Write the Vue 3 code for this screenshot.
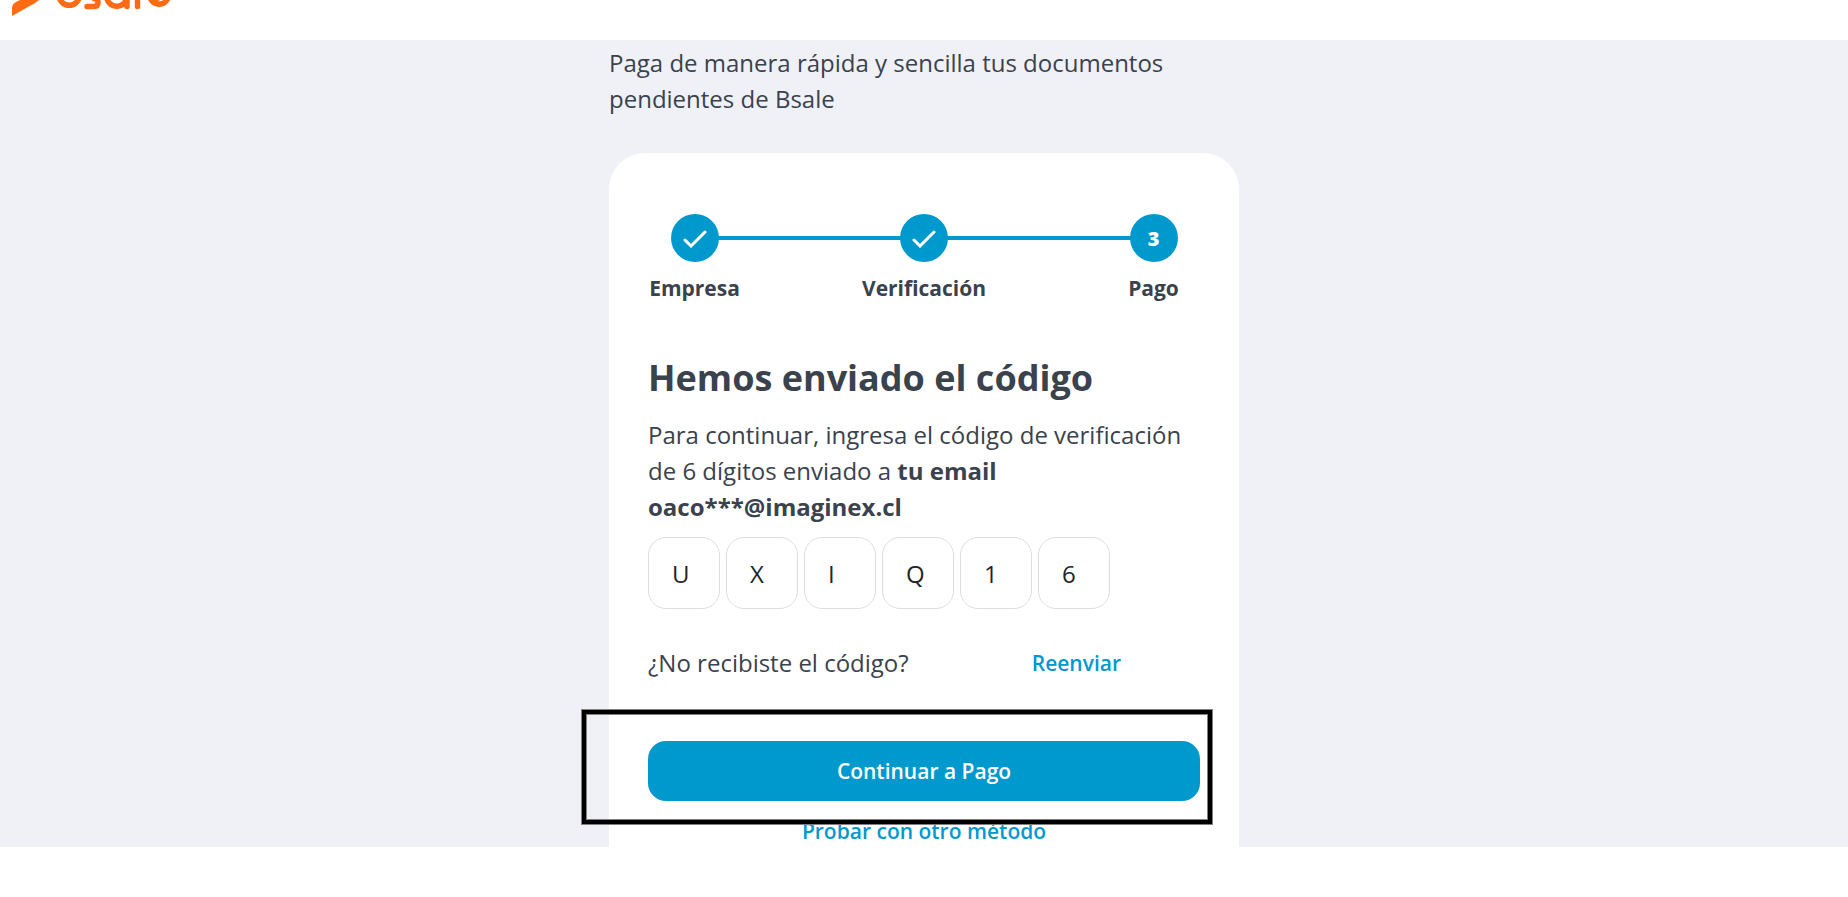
<script setup>
import { ref } from 'vue'

const steps = [
  { label: 'Empresa', done: true },
  { label: 'Verificación', done: true },
  { label: 'Pago', done: false },
]
const code = ref(['U', 'X', 'I', 'Q', '1', '6'])
</script>

<template>
  <div class="page">
    <header class="topbar">
      <a class="logo" href="#" aria-label="bsale">
        <svg width="180" height="20" viewBox="0 0 180 20" fill="none" aria-hidden="true">
          <path d="M12 16V8Q12 4 16 2L20 0H39L35 3Z" fill="#ff6a13" />
          <g stroke="#ff6a13" stroke-width="5.500" stroke-linecap="round" stroke-linejoin="round">
            <path d="M59 -4A10.300 10.300 0 0 0 79.500 -4" />
            <path d="M87 6.500H94Q98 6.500 98 2.500Q98 -1 94 -1.500" />
            <path d="M127 -4A10.200 10.200 0 0 1 106.600 -4M127 -6V6.500" />
            <path d="M137.500 -6V6.500" />
            <path d="M167 0A9.500 9.500 0 0 1 150 -3" />
            <path d="M154 2L165 -4" stroke-width="2.500" />
          </g>
        </svg>
      </a>
    </header>

    <main class="content">
      <div class="column">
        <p class="intro">Paga de manera rápida y sencilla tus documentos pendientes de Bsale</p>

        <section class="card">
          <ol class="steps">
            <li v-for="(step, i) in steps" :key="step.label" class="step">
              <span class="dot">
                <svg v-if="step.done" width="24" height="18" viewBox="0 0 24 18" aria-hidden="true">
                  <path d="M2 10L8 16L22 2" fill="none" stroke="#fff" stroke-width="3" stroke-linecap="round" />
                </svg>
                <template v-else>{{ i + 1 }}</template>
              </span>
              <span class="label">{{ step.label }}</span>
            </li>
          </ol>

          <h1>Hemos enviado el código</h1>
          <p class="help">
            Para continuar, ingresa el código de verificación de 6 dígitos enviado a
            <strong>tu email</strong> <strong>oaco***@imaginex.cl</strong>
          </p>

          <form @submit.prevent>
            <div class="code">
              <input
                v-for="(_, i) in code"
                :key="i"
                v-model="code[i]"
                type="text"
                maxlength="1"
                :aria-label="`Dígito ${i + 1}`"
              />
            </div>
            <div class="resend">
              <span>¿No recibiste el código?</span>
              <button type="button" class="text-button">Reenviar</button>
            </div>
            <div class="action">
              <button type="submit" class="primary">Continuar a Pago</button>
              <span class="highlight"></span>
            </div>
            <a class="other" href="#">Probar con otro método</a>
          </form>
        </section>
      </div>
    </main>
  </div>
</template>

<style>
body {
  background: #fff;
}
</style>

<style scoped>
.page {
  font-family: "Open Sans", "Noto Sans", sans-serif;
  font-size: 24px;
  line-height: 36px;
  color: #3a424d;
  padding-bottom: 50px;
}
.page * {
  box-sizing: border-box;
}
.topbar {
  height: 40px;
  background: #fff;
}
.logo,
.logo svg {
  display: block;
  width: 180px;
}
.content {
  background: #f0f1f7;
  padding: 5px 24px 0;
}
.column {
  max-width: 630px;
  margin: 0 auto;
}
p,
h1,
ol {
  margin: 0;
}
.card {
  margin-top: 36px;
  padding: 61px 39px 0;
  background: #fff;
  border-radius: 36px 36px 0 0;
}
.steps {
  position: relative;
  display: flex;
  justify-content: space-between;
  padding: 0;
  list-style: none;
}
.steps::before {
  content: "";
  position: absolute;
  top: 22px;
  left: 47px;
  right: 47px;
  height: 4px;
  background: #0099ce;
}
.step {
  position: relative;
  flex: 0 0 93px;
  display: flex;
  flex-direction: column;
  align-items: center;
}
.dot {
  width: 48px;
  height: 48px;
  padding-top: 2px;
  border-radius: 50%;
  background: #0099ce;
  color: #fff;
  display: flex;
  align-items: center;
  justify-content: center;
  font-size: 20px;
  font-weight: 800;
}
.label {
  margin-top: 8px;
  font-size: 21px;
  font-weight: 700;
}
h1 {
  margin-top: 48px;
  font-size: 36px;
  line-height: 48px;
  font-weight: 700;
}
.help {
  margin-top: 15px;
}
.code {
  display: flex;
  gap: 6px;
  margin-top: 12px;
}
.code input {
  width: 72px;
  height: 72px;
  padding: 0 23px;
  border: 1px solid #dedede;
  border-radius: 18px;
  background: #fff;
  color: #212529;
  font: inherit;
}
.resend {
  display: flex;
  justify-content: space-between;
  align-items: center;
  width: 473px;
  max-width: 100%;
  margin-top: 36px;
}
button {
  font: inherit;
  font-size: 21px;
  font-weight: 600;
  border: 0;
  cursor: pointer;
}
.text-button {
  padding: 0;
  background: none;
  color: #0099ce;
}
.action {
  position: relative;
  margin-top: 60px;
}
.primary {
  display: block;
  width: 100%;
  height: 60px;
  border-radius: 18px;
  background: #0099ce;
  color: #fff;
}
.highlight {
  position: absolute;
  inset: -31px -12px -23px -66px;
  z-index: 1;
  border: 4px solid #000;
  box-shadow: 0 0 0 1px #808080, inset 0 0 0 1px #808080;
  pointer-events: none;
}
.other {
  display: block;
  margin-top: 14px;
  line-height: 32px;
  text-align: center;
  font-size: 21px;
  font-weight: 600;
  color: #0099ce;
  text-decoration: none;
}
</style>
